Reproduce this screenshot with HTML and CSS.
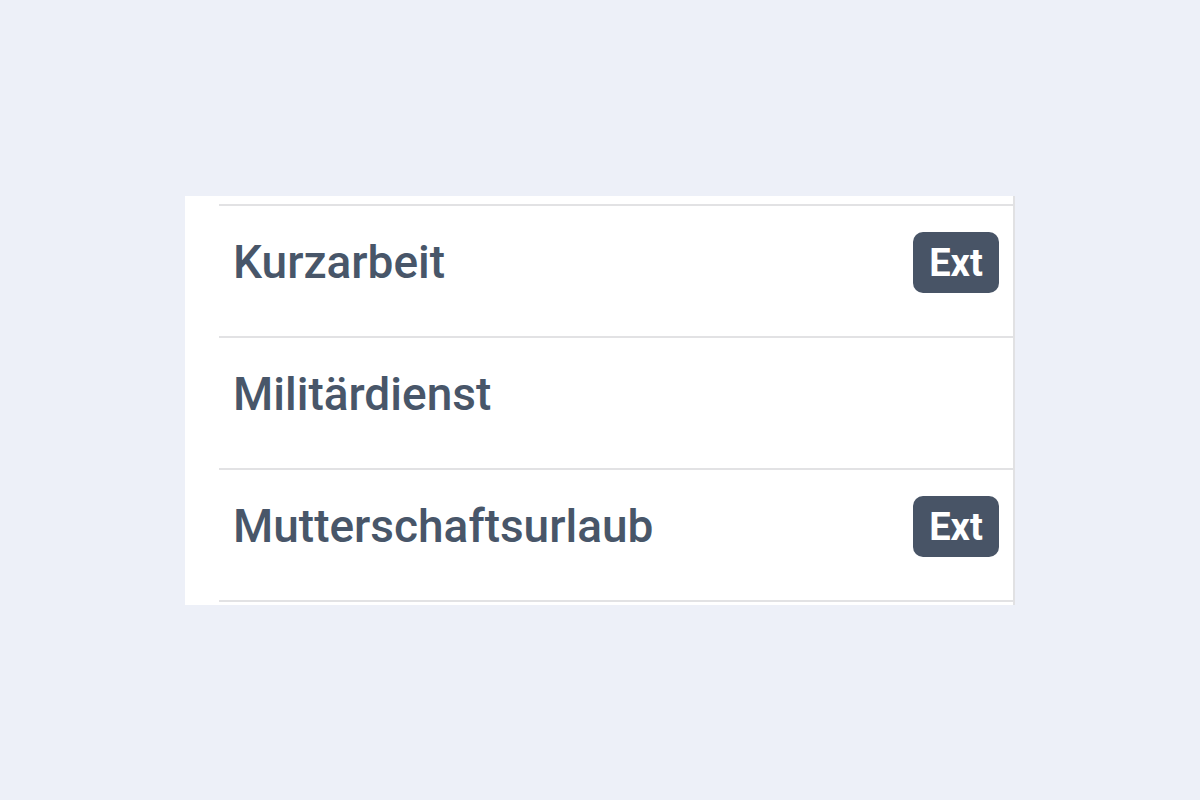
FILE: index.html
```html
<!DOCTYPE html>
<html lang="de">
<head>
<meta charset="utf-8">
<title>Liste</title>
<link rel="stylesheet" href="styles.css">
</head>
<body>
<div class="stage">
  <div class="panel">
    <ul class="list">
      <li class="item"><span class="label">Kurzarbeit</span><span class="badge">Ext</span></li>
      <li class="item"><span class="label">Militärdienst</span></li>
      <li class="item"><span class="label">Mutterschaftsurlaub</span><span class="badge">Ext</span></li>
    </ul>
  </div>
</div>
</body>
</html>
```
FILE: styles.css
```css
html, body {
  margin: 0;
  padding: 0;
}
body {
  background: #edf0f8;
  font-family: Roboto, "Liberation Sans", sans-serif;
}
.stage {
  min-height: 100vh;
  display: flex;
  align-items: center;
  justify-content: center;
}
.panel {
  width: 794px;
  height: 401px;
  background: #ffffff;
  border-right: 2px solid #e1e1e3;
  padding: 8px 0 0 34px;
}
.list {
  list-style: none;
  margin: 0;
  padding: 0;
  border-top: 2px solid #e2e2e4;
}
.item {
  height: 130px;
  border-bottom: 2px solid #e2e2e4;
  display: flex;
  align-items: center;
  justify-content: space-between;
  padding: 0 14px 0 14px;
  box-sizing: content-box;
}
.label {
  font-size: 46px;
  font-weight: 500;
  color: #485669;
  margin-top: -18px;
}
.badge {
  width: 86px;
  height: 61px;
  border-radius: 10px;
  background: #485466;
  color: #ffffff;
  font-size: 38px;
  font-weight: 700;
  display: flex;
  align-items: center;
  justify-content: center;
  margin-top: -16px;
}
```
